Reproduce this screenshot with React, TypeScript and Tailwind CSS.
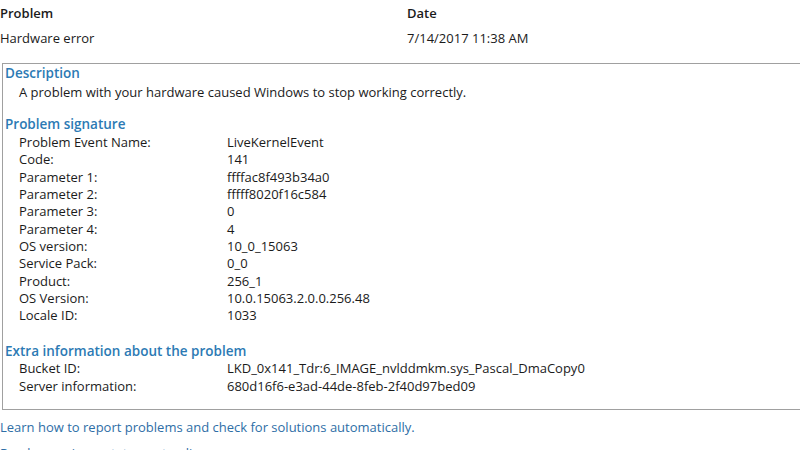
const signature = [
  ['Problem Event Name:', 'LiveKernelEvent'],
  ['Code:', '141'],
  ['Parameter 1:', 'ffffac8f493b34a0'],
  ['Parameter 2:', 'fffff8020f16c584'],
  ['Parameter 3:', '0'],
  ['Parameter 4:', '4'],
  ['OS version:', '10_0_15063'],
  ['Service Pack:', '0_0'],
  ['Product:', '256_1'],
  ['OS Version:', '10.0.15063.2.0.0.256.48'],
  ['Locale ID:', '1033'],
];

const extra = [
  ['Bucket ID:', 'LKD_0x141_Tdr:6_IMAGE_nvlddmkm.sys_Pascal_DmaCopy0'],
  ['Server information:', '680d16f6-e3ad-44de-8feb-2f40d97bed09'],
];

function Rows({ rows }: { rows: string[][] }) {
  return (
    <div className="pl-[14px]">
      {rows.map(([label, value]) => (
        <div key={label} className="flex h-[17.3px] items-center">
          <span className="w-[208px] shrink-0">{label}</span>
          <span>{value}</span>
        </div>
      ))}
    </div>
  );
}

function Heading({ children }: { children: string }) {
  return <div className="h-[18px] flex items-center font-semibold text-[13.5px] text-[#2c7ab4]">{children}</div>;
}

export default function App() {
  return (
    <div
      className="w-[800px] h-[450px] overflow-hidden bg-white text-[13px] text-[#1b1b1b] leading-none"
      style={{ fontFamily: '"Open Sans", "Noto Sans", sans-serif' }}
    >
      {/* header */}
      <div className="flex pt-[4px]">
        <div className="w-[407px]">
          <div className="h-[18px] flex items-center font-semibold">Problem</div>
          <div className="h-[18px] mt-[7px] flex items-center">Hardware error</div>
        </div>
        <div>
          <div className="h-[18px] flex items-center font-semibold">Date</div>
          <div className="h-[18px] mt-[7px] flex items-center">7/14/2017 11:38 AM</div>
        </div>
      </div>

      {/* details box */}
      <div className="ml-[2px] mt-[16px] w-[820px] h-[347px] border border-[#a0a0a0] pl-[2px] pt-[1px]">
        <Heading>Description</Heading>
        <div className="h-[18px] flex items-center pl-[14px]">
          A problem with your hardware caused Windows to stop working correctly.
        </div>

        <div className="mt-[15px]">
          <Heading>Problem signature</Heading>
        </div>
        <Rows rows={signature} />

        <div className="mt-[18px]">
          <Heading>Extra information about the problem</Heading>
        </div>
        <Rows rows={extra} />
      </div>

      <div className="mt-[8px] h-[18px] flex items-center text-[#2e6ea6]">
        Learn how to report problems and check for solutions automatically.
      </div>
      <div className="mt-[8px] h-[18px] flex items-center text-[#2e6ea6]">
        Read our privacy statement online
      </div>
    </div>
  );
}
